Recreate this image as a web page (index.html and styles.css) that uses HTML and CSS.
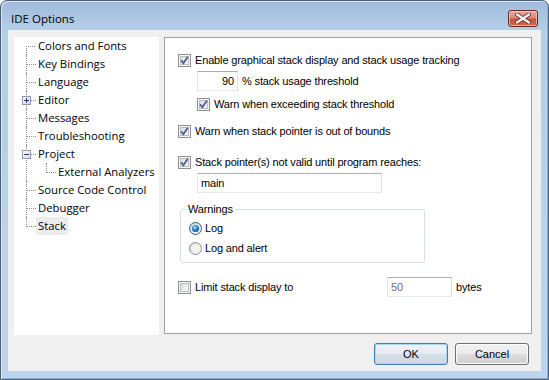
FILE: index.html
```html
<!DOCTYPE html>
<html lang="en">
<head>
    <meta charset="UTF-8">
    <meta name="viewport" content="width=device-width, initial-scale=1.0">
    <title>IDE Options</title>
    <link rel="stylesheet" href="styles.css">
</head>
<body>

    <!-- Shared drawings for checkboxes, radios and tree expanders -->
    <svg class="svg-defs" aria-hidden="true">
        <defs>
            <linearGradient id="boxFill" x1="0" y1="0" x2="1" y2="1">
                <stop offset="0" stop-color="#d9dbde"/>
                <stop offset="1" stop-color="#fbfbfb"/>
            </linearGradient>
            <linearGradient id="radioFill" x1="0" y1="0" x2="1" y2="1">
                <stop offset="0" stop-color="#d4d4d4"/>
                <stop offset="1" stop-color="#fafafa"/>
            </linearGradient>
            <radialGradient id="radioDot" cx="0.4" cy="0.35" r="0.7">
                <stop offset="0" stop-color="#b9e2fb"/>
                <stop offset="0.45" stop-color="#3d8fd0"/>
                <stop offset="1" stop-color="#0d4a7e"/>
            </radialGradient>
            <linearGradient id="expFill" x1="0" y1="0" x2="1" y2="1">
                <stop offset="0" stop-color="#ffffff"/>
                <stop offset="1" stop-color="#d8d8d8"/>
            </linearGradient>
            <symbol id="cb-off" viewBox="0 0 13 13">
                <rect x="0.5" y="0.5" width="12" height="12" fill="#f6f6f6" stroke="#8e8f8f"/>
                <rect x="2.5" y="2.5" width="8" height="8" fill="url(#boxFill)" stroke="#b9bcc1"/>
            </symbol>
            <symbol id="cb-on" viewBox="0 0 13 13">
                <rect x="0.5" y="0.5" width="12" height="12" fill="#f6f6f6" stroke="#8e8f8f"/>
                <rect x="2.5" y="2.5" width="8" height="8" fill="url(#boxFill)" stroke="#b9bcc1"/>
                <path d="M3.2 6.4 L5.4 9.2 L9.8 2.8" fill="none" stroke="#4b5d99" stroke-width="1.8"/>
            </symbol>
            <symbol id="radio-off" viewBox="0 0 13 13">
                <circle cx="6.5" cy="6.5" r="6" fill="url(#radioFill)" stroke="#8e8f8f"/>
                <circle cx="6.5" cy="6.5" r="4" fill="#f2f2f2"/>
            </symbol>
            <symbol id="radio-on" viewBox="0 0 13 13">
                <circle cx="6.5" cy="6.5" r="6" fill="url(#radioFill)" stroke="#2c628b"/>
                <circle cx="6.5" cy="6.5" r="3.6" fill="url(#radioDot)"/>
            </symbol>
            <symbol id="tree-plus" viewBox="0 0 9 9">
                <rect x="0.5" y="0.5" width="8" height="8" fill="url(#expFill)" stroke="#8f9aa8"/>
                <path d="M2 4.5 H7 M4.5 2 V7" stroke="#1f3b78"/>
            </symbol>
            <symbol id="tree-minus" viewBox="0 0 9 9">
                <rect x="0.5" y="0.5" width="8" height="8" fill="url(#expFill)" stroke="#8f9aa8"/>
                <path d="M2 4.5 H7" stroke="#1f3b78"/>
            </symbol>
        </defs>
    </svg>

    <div class="window">

        <!-- Title bar -->
        <div class="titlebar">
            <span class="title">IDE Options</span>
            <button class="close-btn" aria-label="Close">
                <svg width="18" height="11" viewBox="0 0 18 11">
                    <path d="M3 1.5 L15 9.5 M15 1.5 L3 9.5" stroke="#6b2d24" stroke-width="4" stroke-linecap="round"/>
                    <path d="M3 1.5 L15 9.5 M15 1.5 L3 9.5" stroke="#f4f4f4" stroke-width="2.4" stroke-linecap="round"/>
                </svg>
            </button>
        </div>

        <div class="client">
            <div class="panes">

                <!-- Category tree -->
                <div class="tree">
                    <ul class="tree-root">
                        <li><span class="label">Colors and Fonts</span></li>
                        <li><span class="label">Key Bindings</span></li>
                        <li><span class="label">Language</span></li>
                        <li>
                            <svg class="expander" width="9" height="9"><use href="#tree-plus"/></svg>
                            <span class="label">Editor</span>
                        </li>
                        <li><span class="label">Messages</span></li>
                        <li><span class="label">Troubleshooting</span></li>
                        <li>
                            <svg class="expander" width="9" height="9"><use href="#tree-minus"/></svg>
                            <span class="label">Project</span>
                            <ul>
                                <li><span class="label">External Analyzers</span></li>
                            </ul>
                        </li>
                        <li><span class="label">Source Code Control</span></li>
                        <li><span class="label">Debugger</span></li>
                        <li class="selected"><span class="label">Stack</span></li>
                    </ul>
                </div>

                <!-- Stack options page -->
                <div class="options">
                    <label class="check-row">
                        <svg class="check" width="13" height="13"><use href="#cb-on"/></svg>
                        <span>Enable graphical stack display and stack usage tracking</span>
                    </label>

                    <div class="field-row indent">
                        <input type="text" class="text-input threshold" value="90">
                        <span>% stack usage threshold</span>
                    </div>

                    <label class="check-row indent row-warn">
                        <svg class="check" width="13" height="13"><use href="#cb-on"/></svg>
                        <span>Warn when exceeding stack threshold</span>
                    </label>

                    <label class="check-row row-bounds">
                        <svg class="check" width="13" height="13"><use href="#cb-on"/></svg>
                        <span>Warn when stack pointer is out of bounds</span>
                    </label>

                    <label class="check-row row-valid">
                        <svg class="check" width="13" height="13"><use href="#cb-on"/></svg>
                        <span>Stack pointer(s) not valid until program reaches:</span>
                    </label>

                    <div class="field-row indent">
                        <input type="text" class="text-input symbol" value="main">
                    </div>

                    <fieldset class="group">
                        <legend>Warnings</legend>
                        <label class="radio-row">
                            <svg class="radio" width="13" height="13"><use href="#radio-on"/></svg>
                            <span>Log</span>
                        </label>
                        <label class="radio-row">
                            <svg class="radio" width="13" height="13"><use href="#radio-off"/></svg>
                            <span>Log and alert</span>
                        </label>
                    </fieldset>

                    <div class="limit-row">
                        <label class="check-row limit-label">
                            <svg class="check" width="13" height="13"><use href="#cb-off"/></svg>
                            <span>Limit stack display to</span>
                        </label>
                        <input type="text" class="text-input limit" value="50" disabled>
                        <span>bytes</span>
                    </div>
                </div>
            </div>

            <!-- Dialog buttons -->
            <div class="buttons">
                <button class="btn btn-default">OK</button>
                <button class="btn">Cancel</button>
            </div>
        </div>
    </div>

</body>
</html>
```

FILE: styles.css
```css
/* General styling */
body {
    margin: 0;
    background: #ffffff;
    font-family: "Liberation Sans", Arial, sans-serif;
}

.svg-defs {
    position: absolute;
    width: 0;
    height: 0;
    overflow: hidden;
}

/* Window frame */
.window {
    width: 549px;
    height: 380px;
    box-sizing: border-box;
    border: 1px solid #4a5f7c;
    border-radius: 7px 7px 0 0;
    padding: 0 7px 8px 7px;
    background: linear-gradient(#9fbbd9, #b6cfe9 30px, #bcd4ed);
    box-shadow: inset 1px 1px 0 #d8e6f5, inset -1px -1px 0 #8eb0d3;
    display: flex;
    flex-direction: column;
}

/* Title bar */
.titlebar {
    height: 29px;
    box-sizing: border-box;
    padding: 6px 3px 0 3px;
    display: flex;
    align-items: center;
    justify-content: space-between;
}

.title {
    font-family: "Open Sans", sans-serif;
    font-size: 11.5px;
    color: #000000;
}

.close-btn {
    width: 30px;
    height: 17px;
    padding: 0;
    border: 1px solid #6b2a22;
    border-radius: 3px;
    background: linear-gradient(#e8aa9c, #d98a78 48%, #c4503e 52%, #cf6a52);
    box-shadow: inset 0 0 0 1px rgba(255, 220, 210, 0.6);
    display: flex;
    align-items: center;
    justify-content: center;
}

/* Client area */
.client {
    flex: 1;
    background: #f0f0f0;
    padding: 7px 0 0 6px;
    box-sizing: border-box;
    display: flex;
    flex-direction: column;
}

.panes {
    display: flex;
    gap: 5px;
    height: 298px;
}

/* Tree styling */
.tree {
    width: 145px;
    height: 298px;
    background: #ffffff;
    font-family: "Open Sans", sans-serif;
    font-size: 11.3px;
    color: #000000;
}

.tree ul {
    list-style: none;
    margin: 0;
    padding: 0 0 0 20px;
}

.tree .tree-root {
    padding-left: 22px;
}

.tree li {
    position: relative;
}

.tree .label {
    display: inline-block;
    height: 18px;
    line-height: 18px;
    padding: 0 2px;
}

.tree li::before {
    content: "";
    position: absolute;
    left: -10px;
    top: 0;
    width: 9px;
    height: 9px;
    border-left: 1px dotted #8c8c8c;
    border-bottom: 1px dotted #8c8c8c;
}

.tree li::after {
    content: "";
    position: absolute;
    left: -10px;
    top: 9px;
    bottom: 0;
    border-left: 1px dotted #8c8c8c;
}

.tree li:last-child::after {
    display: none;
}

.tree .tree-root > li:first-child::before {
    border-left: none;
}

.tree .expander {
    position: absolute;
    left: -14px;
    top: 5px;
    z-index: 1;
}

.tree .selected > .label {
    background: #ececec;
}

/* Options page */
.options {
    width: 368px;
    height: 297px;
    box-sizing: border-box;
    border: 1px solid #a0a0a0;
    background: #ffffff;
    padding: 14px 0 0 13px;
    font-size: 11px;
    letter-spacing: -0.15px;
    color: #000000;
}

.check-row,
.radio-row {
    display: flex;
    align-items: center;
    gap: 4px;
    height: 16px;
}

.check,
.radio {
    flex: none;
}

.field-row {
    display: flex;
    align-items: center;
    gap: 4px;
    margin-top: 3px;
}

.indent {
    margin-left: 19px;
}

.row-warn {
    margin-top: 5px;
}

.row-bounds {
    margin-top: 11px;
}

.row-valid {
    margin-top: 15px;
}

.text-input {
    height: 20px;
    box-sizing: border-box;
    padding: 0 3px;
    border: 1px solid;
    border-color: #abadb3 #dbdfe6 #e3e9ef #e2e3ea;
    font-family: "Liberation Sans", Arial, sans-serif;
    font-size: 11px;
    letter-spacing: -0.15px;
    color: #000000;
    background: #ffffff;
}

.threshold {
    width: 41px;
    text-align: right;
}

.symbol {
    width: 185px;
}

/* Warnings group box */
.group {
    margin: 9px 0 0 2px;
    width: 245px;
    box-sizing: border-box;
    border: 1px solid #d5dfe5;
    border-radius: 3px;
    padding: 4px 8px 6px 8px;
}

.group legend {
    margin-left: -3px;
    padding: 0 2px;
    line-height: 14px;
}

.group .radio-row + .radio-row {
    margin-top: 4px;
}

.radio-row {
    gap: 3px;
}

/* Limit row */
.limit-row {
    display: flex;
    align-items: center;
    gap: 4px;
    margin-top: 14px;
    height: 20px;
}

.limit-label {
    width: 209px;
    margin-right: -4px;
}

.limit {
    width: 65px;
    color: #6d6d6d;
}

/* Dialog buttons */
.buttons {
    display: flex;
    justify-content: flex-end;
    gap: 7px;
    margin-top: 8px;
    padding-right: 12px;
}

.btn {
    width: 74px;
    height: 22px;
    border: 1px solid #707070;
    border-radius: 3px;
    background: linear-gradient(#f2f2f2, #ebebeb 50%, #dddddd 50%, #cfcfcf);
    box-shadow: inset 0 0 0 1px #fbfbfb;
    font-family: "Liberation Sans", Arial, sans-serif;
    font-size: 11px;
    color: #000000;
    padding: 0;
}

.btn-default {
    border-color: #3c7fb1;
    background: linear-gradient(#f0f4f8, #e4ebf2 50%, #d6e0ea 50%, #ccd8e4);
    box-shadow: inset 0 0 0 1px #a6d6f2;
}
```
